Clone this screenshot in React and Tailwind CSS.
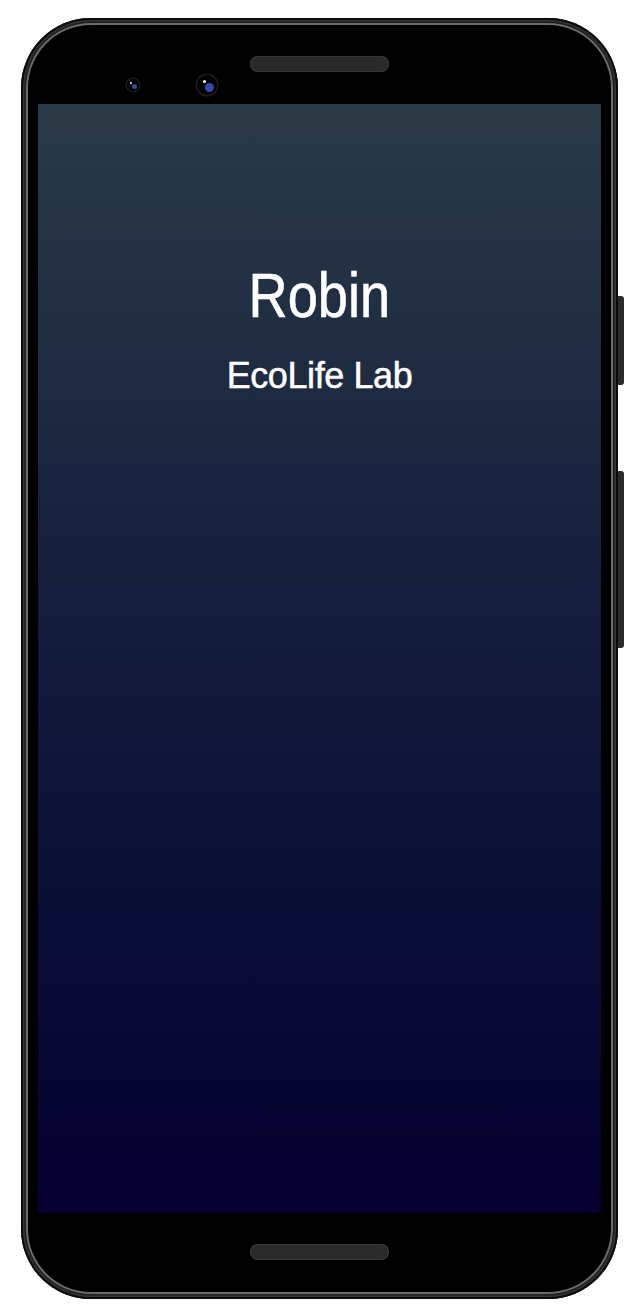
import React from 'react';

const Camera = ({ size }) => (
    <div
        className={`relative rounded-full bg-black shadow-[0_0_0_1.5px_#1c1c1c] ${size === 'lg' ? 'w-[20px] h-[20px]' : 'w-[12px] h-[12px]'}`}
    >
        <div className={`absolute rounded-full bg-[#3848a8] ${size === 'lg' ? 'left-[8px] top-[8px] w-[9px] h-[9px]' : 'left-[5px] top-[5px] w-[5px] h-[5px]'}`} />
        <div className={`absolute rounded-full bg-white ${size === 'lg' ? 'left-[6px] top-[5px] w-[3px] h-[3px]' : 'left-[3px] top-[3px] w-[2px] h-[2px]'}`} />
    </div>
);

const Speaker = () => (
    <div className="w-[139px] h-[16px] rounded-full bg-[#2a2a2a] shadow-[inset_0_0_0_1px_#3a3a3a]" />
);

export default function App() {
    return (
        <div className="w-[641px] h-[1316px] bg-white pt-[18px] pl-[21px]" style={{ fontFamily: '"Liberation Sans", Arial, sans-serif' }}>
            <div className="relative w-[597px] h-[1281px]">
                {/* side buttons */}
                <div className="absolute right-[-6px] top-[278px] w-[8px] h-[89px] rounded-r-[3px] bg-[#2b2b2b]" />
                <div className="absolute right-[-6px] top-[453px] w-[8px] h-[177px] rounded-r-[3px] bg-[#2b2b2b]" />

                {/* body */}
                <div className="relative w-full h-full rounded-[70px] bg-[#1a1a1a] p-[5px] shadow-[inset_0_0_0_2px_#0b0b0b,inset_0_0_3px_3px_#444]">
                    <div className="w-full h-full rounded-[65px] bg-black p-[3px] shadow-[inset_0_0_0_2px_#6a6a6a]">
                        <div className="w-full h-full rounded-[62px] bg-black flex flex-col overflow-hidden">
                            {/* top bezel */}
                            <div className="h-[78px] relative flex justify-center">
                                <div className="mt-[30px]"><Speaker /></div>
                                <div className="absolute left-[98px] top-[53px]"><Camera size="sm" /></div>
                                <div className="absolute left-[168px] top-[49px]"><Camera size="lg" /></div>
                            </div>

                            {/* screen */}
                            <div className="flex-1 mx-[9px] bg-gradient-to-b from-[#2b3b46] via-[#121a3b] to-[#050030] flex flex-col items-center text-white">
                                <div className="mt-[155px] text-[63px] leading-[72px] scale-x-[0.86] [-webkit-text-stroke:0.6px_white]">Robin</div>
                                <div className="mt-[23px] text-[36px] leading-[44px] tracking-[-0.4px] [-webkit-text-stroke:0.5px_white]">EcoLife Lab</div>
                            </div>

                            {/* bottom bezel */}
                            <div className="h-[78px] flex justify-center">
                                <div className="mt-[31px]"><Speaker /></div>
                            </div>
                        </div>
                    </div>
                </div>
            </div>
        </div>
    );
}
